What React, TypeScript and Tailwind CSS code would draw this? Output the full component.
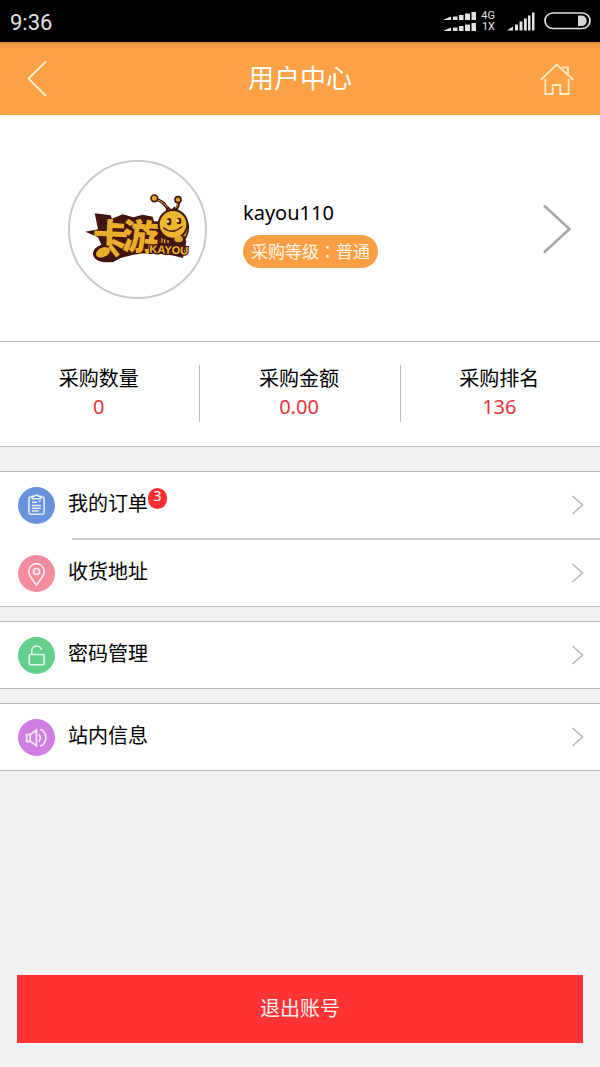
import React from "react";

type MenuItem = {
  label: string;
  color: string;
  icon: React.ReactNode;
  count?: number;
};

const stats = [
  {label: "采购数量", value: "0"},
  {label: "采购金额", value: "0.00"},
  {label: "采购排名", value: "136"},
];

const OrderIcon = () => (
  <svg viewBox="0 0 37 37" className="size-full" fill="none" stroke="#fff" strokeOpacity="0.85" strokeWidth="1.5">
    <path d="M14.5 10h-2a1.6 1.6 0 0 0-1.6 1.6v14a1.6 1.6 0 0 0 1.6 1.6h12a1.6 1.6 0 0 0 1.6-1.6v-14a1.6 1.6 0 0 0-1.6-1.6h-2"/>
    <path d="M14.5 9.2h2l.8-.9h2.4l.8.9h2v2.6h-8z"/>
    <path d="M14 15.3h5M20.5 14.3h2M14 18.5h9M14 21.3h9M14 24.1h6.5"/>
  </svg>
);

const AddressIcon = () => (
  <svg viewBox="0 0 37 37" className="size-full" fill="none" stroke="#fff" strokeOpacity="0.85" strokeWidth="1.7">
    <path d="M18.5 30c-2-3.2-7.8-8.8-7.8-13.5a7.8 7.8 0 0 1 15.6 0c0 4.7-5.8 10.3-7.8 13.5z"/>
    <circle cx="18.5" cy="16.5" r="3"/>
  </svg>
);

const PasswordIcon = () => (
  <svg viewBox="0 0 37 37" className="size-full" fill="none" stroke="#fff" strokeOpacity="0.85" strokeWidth="1.6">
    <rect x="11.3" y="17.5" width="14.8" height="10.2" rx="1"/>
    <path d="M13.7 17.5v-2.8a5 5 0 0 1 9.8-1.9"/>
  </svg>
);

const MessageIcon = () => (
  <svg viewBox="0 0 37 37" className="size-full" fill="none" stroke="#fff" strokeOpacity="0.85" strokeWidth="1.7">
    <path d="M8.6 15.5h3.6v6.8H8.6zM12.2 15.5l6.2-4.3v15.4l-6.2-4.3"/>
    <path d="M20.7 15.2a5 5 0 0 1 0 7.4"/>
    <path d="M22.3 10.3a9.3 9.3 0 0 1 0 17"/>
  </svg>
);

const groups: MenuItem[][] = [
  [
    {label: "我的订单", color: "bg-[#6893dc]", icon: <OrderIcon/>, count: 3},
    {label: "收货地址", color: "bg-[#f58c9d]", icon: <AddressIcon/>},
  ],
  [{label: "密码管理", color: "bg-[#62cf8a]", icon: <PasswordIcon/>}],
  [{label: "站内信息", color: "bg-[#cf7fe2]", icon: <MessageIcon/>}],
];

const StatusBar = () => (
  <div className="flex h-[42px] items-center justify-between bg-black pr-[9px] pl-2.5 text-[#e2e2e2]">
    <span className="pt-1 font-[Roboto,sans-serif] text-[22px] leading-6">9:36</span>
    <div className="flex items-center">
      <svg viewBox="0 0 32 20" className="h-5 w-8" fill="#e2e2e2" aria-hidden="true">
        <path d="M0 8.5l7-3V9H0zM9 5.5h4.5V9H9zM15 4h4.5v5H15zM21 2.500h5V9h-5zM27.500 1H32v8h-4.500z"/>
        <path d="M0 19.500l7-3V20H0zM9 16.500h4.500V20H9zM15 15h4.500v5H15zM21 13.500h5V20h-5zM27.500 12H32v8h-4.500z"/>
      </svg>
      <div className="ml-1 flex w-[15px] flex-col items-end font-[Roboto,sans-serif] text-[11px] leading-[11px]">
        <span>4G</span>
        <span>1X</span>
      </div>
      <svg viewBox="0 0 28 19" className="ml-3 h-[19px] w-7" fill="#e2e2e2" aria-hidden="true">
        <path d="M0 18.5l6-4v4zM8 12.5h3v6H8zM12.500 9.500h3v9h-3zM17 6.500h2.800v12H17zM21 3.500h2.500v15H21zM25 .500h2.500v18H25z"/>
      </svg>
      <svg viewBox="0 0 47 18" className="ml-[9px] h-[18px] w-[47px]" fill="none" aria-hidden="true">
        <rect x="1" y="1" width="45" height="15.5" rx="7.75" stroke="#e2e2e2" strokeWidth="1.7"/>
        <path d="M34 3.500h4a5.300 5.300 0 0 1 0 10.500h-4z" fill="#d6d6d6"/>
      </svg>
    </div>
  </div>
);

const Header = () => (
  <header className="flex h-[73px] items-center justify-between bg-[#fca146] px-[26px] text-white shadow-[inset_0_5px_5px_-4px_rgba(120,60,0,0.35)]">
    <button type="button" aria-label="返回" className="flex w-[34px]">
      <svg viewBox="0 0 22 37" className="h-[37px] w-[22px]" fill="none" stroke="#fff3dc" strokeWidth="1.8">
        <path d="M20 1.5L2.5 18.5L20 36"/>
      </svg>
    </button>
    <h1 className="pb-0.5 text-[26px] leading-9">用户中心</h1>
    <a href="#home" aria-label="首页">
      <svg viewBox="360 186 102 96" className="h-8 w-[34px]" fill="none" stroke="#ffeac4" strokeWidth="5.5">
        <path d="M362 237L410.5 190.5L460 237"/>
        <path d="M427 199H444V219"/>
        <path d="M376 234V279H398V252H421V279H446V234"/>
      </svg>
    </a>
  </header>
);

const Logo = () => (
  <svg viewBox="0 0 345 270" className="h-[90px] w-[115px]" role="img" aria-label="卡游 KAYOU">
    {/* dark backing behind the lettering */}
    <path
      d="M16 143L54 136L44 88L92 94L96 104L128 91L160 100L188 92L218 98L222 112L240 112L300 150L319 172L309 222Q230 200 160 212L122 222L100 234Q44 240 39 210Q38 192 64 182L54 160Z"
      fill="#42150f"
    />
    {/* antennae */}
    <g fill="none" stroke="#42150f" strokeWidth="9" strokeLinecap="round">
      <path d="M223 45Q254 49 267 84"/>
      <path d="M294 49Q299 68 281 84"/>
    </g>
    <path d="M228 46Q253 53 268 80M294 52Q295 68 281 80" fill="none" stroke="#e4a82a" strokeWidth="3"/>
    <circle cx="223" cy="43" r="10" fill="#e4a82a" stroke="#42150f" strokeWidth="5"/>
    <circle cx="294" cy="47" r="9" fill="#e4a82a" stroke="#42150f" strokeWidth="5"/>
    <path d="M257 84L265 70L274 79L284 70L289 86Z" fill="#e4a82a" stroke="#42150f" strokeWidth="4"/>
    {/* lettering */}
    <g
      fill="#e9ae2b"
      className="font-['Noto_Sans_CJK_SC',sans-serif] font-black"
    >
      <text x="38" y="196" fontSize="106" transform="rotate(3 90 160)">卡</text>
      <text x="127" y="198" fontSize="108" transform="rotate(3 180 160)">游</text>
    </g>
    <ellipse cx="69" cy="205" rx="25" ry="17" transform="rotate(-25 69 205)" fill="#e9ae2b" stroke="#42150f" strokeWidth="6"/>
    <path d="M90 186L114 216" stroke="#e9ae2b" strokeWidth="14"/>
    {/* body and head */}
    <path d="M302 92Q331 112 324 142Q320 160 309 174L288 158Z" fill="#e4a82a" stroke="#42150f" strokeWidth="5"/>
    <circle cx="279" cy="121" r="43" fill="#eeb62e" stroke="#42150f" strokeWidth="6"/>
    <ellipse cx="267" cy="113" rx="7" ry="11" fill="#42150f"/>
    <ellipse cx="297" cy="111" rx="7" ry="10" fill="#42150f"/>
    <circle cx="263" cy="112" r="5" fill="#f7cf63"/>
    <circle cx="293" cy="110" r="5" fill="#f7cf63"/>
    <path d="M251 132Q276 153 305 128" fill="none" stroke="#42150f" strokeWidth="4" strokeLinecap="round"/>
    <path d="M240 158Q262 170 286 164L314 155L318 174L306 192L240 186Z" fill="#42150f"/>
    <path d="M246 163v13M254 166v12M264 168v10" stroke="#e4a82a" strokeWidth="4"/>
    <ellipse cx="296" cy="165" rx="13" ry="10" fill="#e4a82a"/>
    <text
      x="208"
      y="206"
      fontSize="33"
      fill="#eeb62e"
      stroke="#42150f"
      strokeWidth="7"
      paintOrder="stroke"
      transform="rotate(3 208 206)"
      className="font-['Liberation_Sans_Narrow','Liberation_Sans',sans-serif] font-bold"
    >
      KAYOU
    </text>
  </svg>
);

const Profile = () => (
  <a href="#profile" className="flex h-[227px] items-center border-b border-[#b9b9b9] bg-white pt-0.5 pr-7 pl-[68px]">
    <div className="flex size-[139px] items-center justify-center rounded-full border-2 border-[#c9c9c9]">
      <Logo/>
    </div>
    <div className="ml-9 flex flex-1 flex-col items-start gap-2 pt-2">
      <span className="text-xl leading-7 text-black">kayou110</span>
      <span className="rounded-full bg-[#fb9f45] px-2 text-[17px] leading-8 whitespace-nowrap text-[#fff6e6]">
        采购等级<span className="font-['Noto_Sans_CJK_TC',sans-serif]">：</span>普通
      </span>
    </div>
    <svg viewBox="0 0 30 50" className="h-[50px] w-[30px]" fill="none" stroke="#a6a6a6" strokeWidth="2.5" aria-hidden="true">
      <path d="M2 1.5L27.5 25L2 48.5"/>
    </svg>
  </a>
);

const Stats = () => (
  <dl className="flex border-b border-[#b9b9b9] bg-white pt-[23px] pb-6">
    {stats.map((s) => (
      <div
        key={s.label}
        className="flex h-[57px] flex-1 flex-col items-center border-r border-[#b9b9b9] pr-0.5 last:border-r-0"
      >
        <dt className="text-xl leading-7 text-black">{s.label}</dt>
        <dd className="text-xl leading-7 text-[#e8333a]">{s.value}</dd>
      </div>
    ))}
  </dl>
);

const Row = ({item, first}: {item: MenuItem; first: boolean}) => (
  <a href="#menu" className="block">
    {!first && <div className="ml-[72px] h-0.5 bg-[#cfcfcf]"/>}
    <div className="flex h-[66px] items-center pr-4 pl-[18px]">
      <span className={`size-[37px] rounded-full ${item.color}`}>{item.icon}</span>
      <span className="relative ml-[13px] pb-0.5 text-xl leading-7 text-black">
        {item.label}
        {item.count && (
          <span className="absolute -top-0.5 left-full h-[21px] w-[19px] rounded-full bg-[#fb2f33] text-center text-sm leading-4 text-white">
            {item.count}
          </span>
        )}
      </span>
      <svg viewBox="0 0 13 20" className="ml-auto h-5 w-[13px]" fill="none" stroke="#b8b8b8" strokeWidth="1.6" aria-hidden="true">
        <path d="M1.5 1L11.5 10L1.5 19"/>
      </svg>
    </div>
  </a>
);

const App = () => {
  return (<div className="flex min-h-screen flex-col bg-[#f2f2f2] font-['Noto_Sans','Noto_Sans_CJK_SC',sans-serif]">
    <StatusBar/>
    <Header/>
    <main className="flex flex-1 flex-col">
      <Profile/>
      <Stats/>
      <nav className="mt-6 flex flex-col gap-3.5">
        {groups.map((group) => (
          <div key={group[0].label} className="border-y border-[#b9b9b9] bg-white">
            {group.map((item, i) => (
              <Row key={item.label} item={item} first={i === 0}/>
            ))}
          </div>
        ))}
      </nav>
      <button type="button" className="mx-[17px] mt-auto mb-6 h-[68px] bg-[#ff3334] text-xl leading-7 text-[#fff0ec]">
        退出账号
      </button>
    </main>
  </div>)
}

export default App;
